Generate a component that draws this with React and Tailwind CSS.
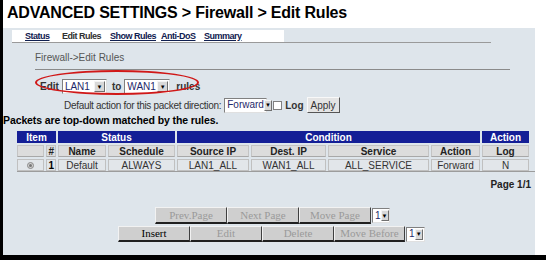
import React from "react"

const font = { fontFamily: '"Liberation Sans", Arial, sans-serif' }

const Select = ({ value, width }) => (
  <div
    className={`flex items-center h-[15px] bg-white border border-t-[#808080] border-l-[#808080] border-b-[#e0e0e0] border-r-[#e0e0e0] font-normal ${width}`}
  >
    <span className="flex-1 pl-[2px] text-[10px] leading-none text-[#1f2a6a]">{value}</span>
    <span className="w-[11px] h-[11px] mr-[1px] bg-[#d8d8d8] border border-[#f4f4f4] border-r-[#707070] border-b-[#707070] flex items-center justify-center text-[6px] leading-none text-black">
      ▼
    </span>
  </div>
)

const OldButton = ({ label, width, active }) => (
  <div
    className={`${width} h-full flex items-center justify-center bg-[#cfcfcf] border border-[#f2f2f2] border-r-[#404040] border-b-[#202020] border-b-2 text-[11px] ${
      active ? "text-black" : "text-[#9a9a9a]"
    }`}
    style={{ fontFamily: '"Liberation Serif", "Times New Roman", serif' }}
  >
    {label}
  </div>
)

export default function App() {
  const tabs = [
    { t: "Status", u: true, w: "w-[37px]" },
    { t: "Edit Rules", u: false, w: "w-[48px]" },
    { t: "Show Rules", u: true, w: "w-[51px]" },
    { t: "Anti-DoS", u: true, w: "w-[43px]" },
    { t: "Summary", u: true, w: "w-[44px]" },
  ]

  const row2 = [
    ["", "w-[27px]"],
    ["#", "w-[10px]"],
    ["Name", "w-[48px]"],
    ["Schedule", "w-[67px]"],
    ["Source IP", "w-[72px]"],
    ["Dest. IP", "w-[75px]"],
    ["Service", "w-[101px]"],
    ["Action", "w-[49px]"],
    ["Log", "w-[47px]"],
  ]
  const data = ["", "1", "Default", "ALWAYS", "LAN1_ALL", "WAN1_ALL", "ALL_SERVICE", "Forward", "N"]

  return (
    <div className="w-[546px] h-[260px] bg-white flex flex-col overflow-hidden" style={font}>
      <div className="flex-1 flex min-h-0">
        <div className="w-[3px] bg-black" />
        <div className="flex-1 flex flex-col">
          <div className="h-[28px] pl-[4px] pt-[3px] text-[16px] font-bold text-black leading-[20px] tracking-[-0.2px]">
            ADVANCED SETTINGS &gt; Firewall &gt; Edit Rules
          </div>
          <div className="flex-1 flex">
            <div className="w-[532px] bg-[#dee5eb] relative flex flex-col">
              {/* tabs */}
              <div className="mt-[2px] ml-[9px] flex">
                <div className="w-[272px] h-[12px] bg-white flex items-center pl-[13px]">
                  {tabs.map((tab) => (
                    <span
                      key={tab.t}
                      className={`${tab.w} shrink-0 whitespace-nowrap text-[9px] font-bold leading-none tracking-[-0.5px] ${
                        tab.u ? "underline text-[#102050]" : "text-[#303030]"
                      }`}
                    >
                      {tab.t}
                    </span>
                  ))}
                </div>
              </div>
              <div className="ml-[9px] w-[479px] h-[1px] bg-[#9a9a9a]" />

              <div className="ml-[32px] mt-[9px] text-[10px] text-[#555] leading-[12px]">Firewall-&gt;Edit Rules</div>
              <div className="ml-[32px] mt-[5px] w-[475px] h-[1px] bg-[#8a8a8a]" />

              {/* edit row */}
              <div className="mt-[9px] ml-[37px] flex items-center gap-[3px] h-[15px] text-[10px] font-bold text-[#333]">
                <span>Edit</span>
                <Select value="LAN1" width="w-[45px]" />
                <span className="ml-[2px]">to</span>
                <Select value="WAN1" width="w-[46px]" />
                <span className="ml-[3px]">rules</span>
              </div>
              <div className="absolute left-[32px] top-[42px] w-[164px] h-[25px] rounded-[50%] border-2 border-[#d01818]" />

              {/* default action */}
              <div className="mt-[3px] ml-[61px] flex items-center h-[16px] text-[10px] text-[#333]">
                <span className="tracking-[-0.3px]">Default action for this packet direction:</span>
                <div className="ml-[3px]">
                  <Select value="Forward" width="w-[43px]" />
                </div>
                <span className="ml-[6px] w-[9px] h-[9px] bg-white border border-[#808080]" />
                <span className="ml-[3px] font-bold">Log</span>
                <span className="ml-[3px] h-[16px] w-[33px] flex items-center justify-center bg-[#e4e4e4] border border-[#f8f8f8] border-r-[#555] border-b-[#555] text-[10px] text-[#333]">
                  Apply
                </span>
              </div>

              <div className="mt-[1px] text-[10.5px] font-bold text-black leading-[13px] tracking-[-0.1px]">
                Packets are top-down matched by the rules.
              </div>

              {/* table */}
              <div className="ml-[14px] mt-[4px] flex flex-col gap-[2px]">
                <div className="flex gap-[2px] h-[12px] text-[10px] font-bold text-white">
                  <div className="w-[39px] bg-[#141e96] flex items-center justify-center">Item</div>
                  <div className="w-[117px] bg-[#141e96] flex items-center justify-center">Status</div>
                  <div className="w-[303px] bg-[#141e96] flex items-center justify-center">Condition</div>
                  <div className="w-[47px] bg-[#141e96] flex items-center justify-center">Action</div>
                </div>
                <div className="flex gap-[2px] h-[12px] text-[10px] font-bold text-[#222]">
                  {row2.map(([t, w], i) => (
                    <div
                      key={i}
                      className={`${w} bg-[#dcdcdc] border border-[#c4c4c4] border-b-[#a8a8a8] flex items-center justify-center ${
                        i === 1 ? "justify-end pr-[1px]" : ""
                      }`}
                    >
                      {t}
                    </div>
                  ))}
                </div>
                <div className="flex gap-[2px] h-[13px] text-[10px] text-[#333] border-b border-[#9c9c9c]">
                  {row2.map(([, w], i) => (
                    <div
                      key={i}
                      className={`${w} bg-[#e2e6ea] border border-[#c0c0c0] flex items-center justify-center ${
                        i === 1 ? "justify-end pr-[1px] font-bold text-black" : ""
                      }`}
                    >
                      {i === 0 ? (
                        <span className="w-[7px] h-[7px] rounded-full border border-[#8a8a8a] bg-[#d0d0d0] flex items-center justify-center">
                          <span className="w-[3px] h-[3px] rounded-full bg-[#777]" />
                        </span>
                      ) : (
                        data[i]
                      )}
                    </div>
                  ))}
                </div>
              </div>

              <div className="mt-[7px] pr-[4px] text-right text-[10px] font-bold text-[#222] leading-[12px]">Page 1/1</div>

              {/* buttons */}
              <div className="mt-[16px] ml-[152px] flex items-center h-[17px]">
                <OldButton label="Prev.Page" width="w-[72px]" />
                <OldButton label="Next Page" width="w-[72px]" />
                <OldButton label="Move Page" width="w-[72px]" />
                <div className="ml-[1px]">
                  <Select value="1" width="w-[18px]" />
                </div>
              </div>
              <div className="mt-[2px] ml-[115px] flex items-center h-[16px]">
                <OldButton label="Insert" width="w-[72px]" active />
                <OldButton label="Edit" width="w-[72px]" />
                <OldButton label="Delete" width="w-[72px]" />
                <OldButton label="Move Before" width="w-[71px]" />
                <div className="ml-[1px]">
                  <Select value="1" width="w-[19px]" />
                </div>
              </div>
            </div>
            <div className="flex-1 bg-white" />
          </div>
        </div>
      </div>
      <div className="h-[5px] bg-black" />
    </div>
  )
}
